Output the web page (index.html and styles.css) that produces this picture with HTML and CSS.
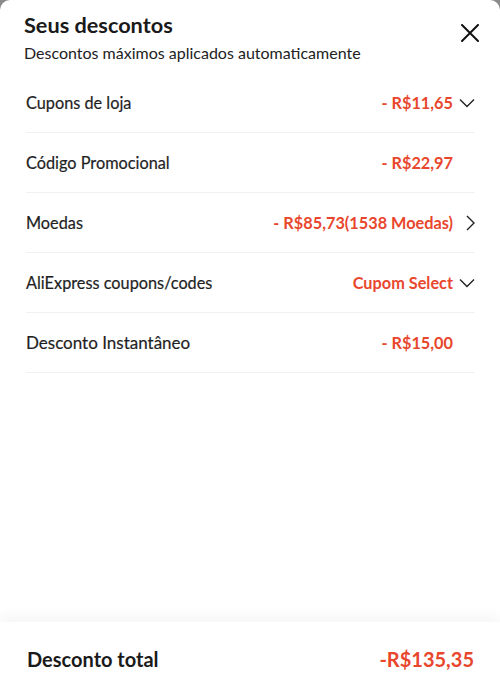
FILE: index.html
```html
<!DOCTYPE html>
<html lang="pt">
<head>
    <meta charset="UTF-8">
    <title>Seus descontos</title>
    <link rel="stylesheet" href="styles.css">
</head>
<body>
    <div class="sheet">
        <div class="header">
            <div>
                <h1>Seus descontos</h1>
                <p class="subtitle">Descontos máximos aplicados automaticamente</p>
            </div>
            <button class="close" aria-label="Fechar">
                <svg width="18" height="18" viewBox="0 0 18 18"><path d="M1 1L17 17M17 1L1 17" stroke="#111" stroke-width="2" stroke-linecap="round"/></svg>
            </button>
        </div>

        <ul class="list">
            <li class="row">
                <span class="label">Cupons de loja</span>
                <span class="value">- R$11,65</span>
                <span class="icon"><svg width="16" height="10" viewBox="0 0 16 10"><path d="M1 1.5L8 8.5L15 1.5" fill="none" stroke="#222" stroke-width="1.4"/></svg></span>
            </li>
            <li class="row">
                <span class="label">Código Promocional</span>
                <span class="value">- R$22,97</span>
                <span class="icon"></span>
            </li>
            <li class="row">
                <span class="label">Moedas</span>
                <span class="value">- R$85,73(1538 Moedas)</span>
                <span class="icon"><svg width="10" height="16" viewBox="0 0 10 16"><path d="M2 1L9 8L2 15" fill="none" stroke="#222" stroke-width="1.4"/></svg></span>
            </li>
            <li class="row">
                <span class="label">AliExpress coupons/codes</span>
                <span class="value">Cupom Select</span>
                <span class="icon"><svg width="16" height="10" viewBox="0 0 16 10"><path d="M1 1.5L8 8.5L15 1.5" fill="none" stroke="#222" stroke-width="1.4"/></svg></span>
            </li>
            <li class="row">
                <span class="label big">Desconto Instantâneo</span>
                <span class="value">- R$15,00</span>
                <span class="icon"></span>
            </li>
        </ul>

        <div class="footer">
            <span class="total-label">Desconto total</span>
            <span class="total-value">-R$135,35</span>
        </div>
    </div>
</body>
</html>
```

FILE: styles.css
```css
html, body { margin: 0; height: 100%; }
body { background: #8a8a8a; font-family: Lato, "Open Sans", sans-serif; color: #222; }
.sheet { background: #fff; border-radius: 10px 10px 0 0; height: 694px; display: flex; flex-direction: column; overflow: hidden; }
.header { display: flex; justify-content: space-between; align-items: flex-start; padding: 12px 21px 0 24px; }
h1 { margin: 0; font-size: 21.7px; font-weight: 700; color: #1a1a1a; line-height: 26px; }
.subtitle { margin: 5px 0 0; font-size: 16px; color: #222; line-height: 20px; }
.close { border: 0; background: none; padding: 0; margin-top: 12px; cursor: pointer; }
.list { list-style: none; margin: 10px 25px 0 26px; padding: 0; flex: 1; }
.row { display: flex; align-items: center; height: 59px; border-bottom: 1px solid #f1f1f1; }
.label { flex: 1; font-size: 16.3px; color: #1f1f1f; -webkit-text-stroke: 0.2px #1f1f1f; }
.label.big { font-size: 17px; }
.value { font-size: 16.3px; font-weight: 700; color: #e8472d; }
.icon { width: 22px; display: flex; justify-content: flex-end; }
.footer { display: flex; justify-content: space-between; align-items: center; height: 70px; padding: 2px 26px 0 27px; box-shadow: 0 -8px 10px rgba(0,0,0,0.03); }
.total-label { font-size: 20px; font-weight: 700; color: #1a1a1a; }
.total-value { font-size: 20px; font-weight: 700; color: #e8472d; }
```
